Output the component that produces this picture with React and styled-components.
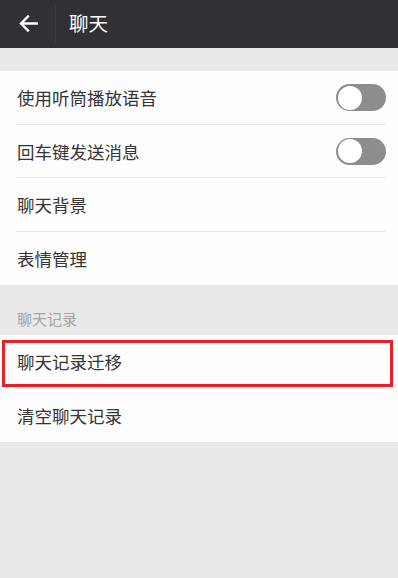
import React from 'react';
import styled, { createGlobalStyle } from 'styled-components';

const GlobalStyle = createGlobalStyle`
  html, body {
    margin: 0;
    padding: 0;
    background: #e8e9e8;
  }
  body {
    font-family: "Noto Sans CJK SC", "Noto Sans", sans-serif;
  }
`;

// settings page for the chat options
const settings = [
  { label: '使用听筒播放语音', toggle: true },
  { label: '回车键发送消息', toggle: true },
  { label: '聊天背景' },
  { label: '表情管理' },
];

const history = [
  { label: '聊天记录迁移', marked: true },
  { label: '清空聊天记录' },
];

const App = () => {
  return (
    <Page>
      <GlobalStyle />
      <Header>
        <BackButton>
          <svg width="19" height="17" viewBox="0 0 19 17" fill="none">
            <path d="M18 8.5H2.5M9 1.5L2 8.5L9 15.5" stroke="#ffffff" strokeWidth="2.4" strokeLinecap="square" />
          </svg>
        </BackButton>
        <HeaderDivider />
        <Title>聊天</Title>
      </Header>

      <Group>
        {settings.map((item) => (
          <Row key={item.label}>
            <Label>{item.label}</Label>
            {item.toggle && (
              <Switch>
                <Knob />
              </Switch>
            )}
          </Row>
        ))}
      </Group>

      <SectionTitle>聊天记录</SectionTitle>

      <Group>
        {history.map((item) => (
          <Row key={item.label}>
            <Label>{item.label}</Label>
            {item.marked && <Highlight />}
          </Row>
        ))}
      </Group>
    </Page>
  );
};

const Page = styled.div`
  width: 398px;
  min-height: 578px;
  background: #e8e9e8;
  display: flex;
  flex-direction: column;
`;

const Header = styled.div`
  height: 48px;
  background: #303035;
  display: flex;
  align-items: center;
  margin-bottom: 23px;
`;

const BackButton = styled.div`
  width: 55px;
  height: 48px;
  display: flex;
  align-items: center;
  padding-left: 19px;
  box-sizing: border-box;
  margin-top: -2px;
`;

const HeaderDivider = styled.div`
  width: 1px;
  height: 38px;
  background: #3b3b40;
`;

const Title = styled.div`
  margin-left: 13px;
  margin-top: -2px;
  color: #ffffff;
  font-size: 19.5px;
  line-height: 1;
`;

const Group = styled.div`
  background: #fdfdfd;
  display: flex;
  flex-direction: column;
`;

const Row = styled.div`
  position: relative;
  height: 53.5px;
  display: flex;
  align-items: center;
  justify-content: space-between;
  padding: 0 12px 0 17px;

  &:not(:last-child)::after {
    content: "";
    position: absolute;
    left: 16px;
    right: 12px;
    bottom: 0;
    height: 1px;
    background: #e6e6e6;
  }
`;

const Label = styled.div`
  color: #353535;
  font-size: 17.5px;
  line-height: 1;
`;

const Switch = styled.div`
  width: 50px;
  height: 27px;
  border-radius: 14px;
  background: #8d8d8d;
  position: relative;
  box-sizing: border-box;
`;

const Knob = styled.div`
  position: absolute;
  left: 1.5px;
  top: 1.5px;
  width: 24px;
  height: 24px;
  border-radius: 50%;
  background: #ffffff;
`;

const SectionTitle = styled.div`
  height: 50px;
  display: flex;
  align-items: flex-end;
  padding: 0 0 9px 17px;
  box-sizing: border-box;
  color: #a3a3a3;
  font-size: 15px;
  line-height: 1;
`;

const Highlight = styled.div`
  position: absolute;
  left: 2px;
  right: 5px;
  top: 5px;
  bottom: 2px;
  border: 3px solid #e8202a;
  pointer-events: none;
`;

export default App;
